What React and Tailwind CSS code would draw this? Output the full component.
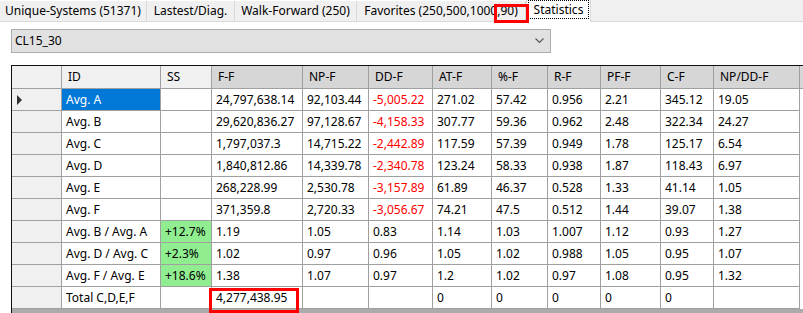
const tabs = [
  { label: "Unique-Systems (51371)", w: "w-[147px]" },
  { label: "Lastest/Diag.", w: "w-[88px]" },
  { label: "Walk-Forward (250)", w: "w-[122px]" },
  { label: "Favorites (250,500,1000,90)", w: "w-[169px]" },
];

const columns = ["ID", "SS", "F-F", "NP-F", "DD-F", "AT-F", "%-F", "R-F", "PF-F", "C-F", "NP/DD-F"];

const rows = [
  ["Avg. A", "", "24,797,638.14", "92,103.44", "-5,005.22", "271.02", "57.42", "0.956", "2.21", "345.12", "19.05"],
  ["Avg. B", "", "29,620,836.27", "97,128.67", "-4,158.33", "307.77", "59.36", "0.962", "2.48", "322.34", "24.27"],
  ["Avg. C", "", "1,797,037.3", "14,715.22", "-2,442.89", "117.59", "57.39", "0.949", "1.78", "125.17", "6.54"],
  ["Avg. D", "", "1,840,812.86", "14,339.78", "-2,340.78", "123.24", "58.33", "0.938", "1.87", "118.43", "6.97"],
  ["Avg. E", "", "268,228.99", "2,530.78", "-3,157.89", "61.89", "46.37", "0.528", "1.33", "41.14", "1.05"],
  ["Avg. F", "", "371,359.8", "2,720.33", "-3,056.67", "74.21", "47.5", "0.512", "1.44", "39.07", "1.38"],
  ["Avg. B / Avg. A", "+12.7%", "1.19", "1.05", "0.83", "1.14", "1.03", "1.007", "1.12", "0.93", "1.27"],
  ["Avg. D / Avg. C", "+2.3%", "1.02", "0.97", "0.96", "1.05", "1.02", "0.988", "1.05", "0.95", "1.07"],
  ["Avg. F / Avg. E", "+18.6%", "1.38", "1.07", "0.97", "1.2", "1.02", "0.97", "1.08", "0.95", "1.32"],
  ["Total C,D,E,F", "", "4,277,438.95", "", "", "0", "0", "0", "0", "0", ""],
];

const gridCols = "grid grid-cols-[50px_99px_51px_91px_66px_64px_59px_56px_53px_60px_53px_86px_40px]";

function HeaderRow() {
  return (
    <div className={`${gridCols} h-[23px]`}>
      <div className="bg-[#f0f0f0] border-r border-b border-[#a0a0a0]" />
      {columns.map((c, i) => (
        <div
          key={c}
          className={`flex items-center pl-[6px] border-r border-b border-[#a0a0a0] ${i < 2 ? "bg-[#f0f0f0]" : "bg-[#d6d6d6]"}`}
        >
          {c}
        </div>
      ))}
      <div className="bg-[#d6d6d6] border-b border-[#a0a0a0]" />
    </div>
  );
}

function DataRow({ row, index }) {
  return (
    <div className={`${gridCols} h-[22px]`}>
      <div className="bg-[#f0f0f0] border-r border-b border-[#a0a0a0] flex items-center pl-[5px]">
        {index === 0 && (
          <svg width="6" height="10" viewBox="0 0 6 10">
            <path d="M0 0 L5 5 L0 10 Z" fill="#333" />
          </svg>
        )}
      </div>
      {row.map((v, i) => {
        let cls = "bg-white text-black";
        if (index === 0 && i === 0) cls = "bg-[#0078d7] text-white";
        else if (i === 1 && v) cls = "bg-[#90ee90] text-black";
        else if (i === 4 && v.startsWith("-")) cls = "bg-white text-[#ff0000]";
        return (
          <div
            key={i}
            className={`flex items-center pl-[4px] whitespace-nowrap overflow-hidden border-r border-b border-[#a0a0a0] ${cls}`}
          >
            {v}
          </div>
        );
      })}
      <div className="bg-white" />
    </div>
  );
}

export default function App() {
  return (
    <div
      className="relative w-[803px] h-[313px] overflow-hidden bg-white text-[12px] text-black"
      style={{ fontFamily: '"Noto Sans", "Open Sans", sans-serif' }}
    >
      {/* tab strip */}
      <div className="flex h-[22px] bg-white border-b border-[#d9d9d9]">
        {tabs.map((t) => (
          <div
            key={t.label}
            className={`${t.w} mt-[1px] flex items-center justify-center bg-[#f0f0f0] border-r border-[#d9d9d9] whitespace-nowrap`}
          >
            {t.label}
          </div>
        ))}
        <div className="w-[65px] h-[22px] bg-white border-x border-[#d9d9d9] px-[1px] pt-0 -mb-[1px]">
          <div className="h-[19px] border border-dotted border-black flex items-center justify-center">
            Statistics
          </div>
        </div>
        <div className="flex-1 bg-[#f0f0f0]" />
      </div>

      {/* combobox */}
      <div className="ml-[11px] mt-[7px] w-[540px] h-[24px] bg-[#e1e1e1] border border-[#adadad] flex items-center justify-between pl-[3px] pr-[6px]">
        <span>CL15_30</span>
        <svg width="9" height="6" viewBox="0 0 9 6">
          <path d="M0.5 0.5 L4.5 4.5 L8.5 0.5" fill="none" stroke="#555" strokeWidth="1.1" />
        </svg>
      </div>

      {/* grid */}
      <div className="ml-[11px] mt-[12px] h-[260px] bg-[#ababab] border-l border-t border-[#101010]">
        <HeaderRow />
        {rows.map((r, i) => (
          <DataRow key={i} row={r} index={i} />
        ))}
      </div>

      {/* annotations */}
      <div className="absolute left-[494px] top-[4px] w-[35px] h-[19px] border-[3px] border-[#ff0000]" />
      <div className="absolute left-[209px] top-[288px] w-[90px] h-[25px] border-[3px] border-[#ff0000]" />
    </div>
  );
}
